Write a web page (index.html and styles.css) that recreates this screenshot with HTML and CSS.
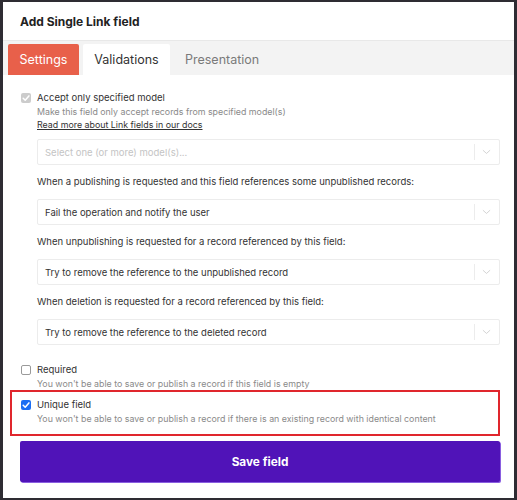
FILE: index.html
```html
<!DOCTYPE html>
<html lang="en">
<head>
<meta charset="utf-8">
<title>Add Single Link field</title>
<link rel="stylesheet" href="styles.css">
</head>
<body>
<div class="modal">
  <div class="modal-header">Add Single Link field</div>
  <div class="tabs">
    <div class="tab tab-active">Settings</div>
    <div class="tab tab-current">Validations</div>
    <div class="tab tab-plain">Presentation</div>
  </div>
  <div class="content">
    <div class="check-row">
      <span class="cb cb-disabled"><svg viewBox="0 0 10 10" class="tick"><path d="M2.2 5.2 L4.2 7.2 L7.9 2.9" /></svg></span>
      <div class="check-text">
        <div class="check-label">Accept only specified model</div>
        <div class="check-desc">Make this field only accept records from specified model(s)</div>
        <div class="check-link">Read more about Link fields in our docs</div>
      </div>
    </div>

    <div class="select select-first">
      <span class="select-value placeholder">Select one (or more) model(s)...</span>
      <span class="select-sep"></span>
      <svg class="chev" viewBox="0 0 10 6"><path d="M1 1 L5 4.6 L9 1"/></svg>
    </div>

    <div class="field-label">When a publishing is requested and this field references some unpublished records:</div>
    <div class="select">
      <span class="select-value">Fail the operation and notify the user</span>
      <span class="select-sep"></span>
      <svg class="chev" viewBox="0 0 10 6"><path d="M1 1 L5 4.6 L9 1"/></svg>
    </div>

    <div class="field-label">When unpublishing is requested for a record referenced by this field:</div>
    <div class="select">
      <span class="select-value">Try to remove the reference to the unpublished record</span>
      <span class="select-sep"></span>
      <svg class="chev" viewBox="0 0 10 6"><path d="M1 1 L5 4.6 L9 1"/></svg>
    </div>

    <div class="field-label">When deletion is requested for a record referenced by this field:</div>
    <div class="select">
      <span class="select-value">Try to remove the reference to the deleted record</span>
      <span class="select-sep"></span>
      <svg class="chev" viewBox="0 0 10 6"><path d="M1 1 L5 4.6 L9 1"/></svg>
    </div>

    <div class="check-row check-required">
      <span class="cb cb-empty"></span>
      <div class="check-text">
        <div class="check-label">Required</div>
        <div class="check-desc">You won't be able to save or publish a record if this field is empty</div>
      </div>
    </div>

    <div class="highlight">
      <div class="check-row">
        <span class="cb cb-checked"><svg viewBox="0 0 10 10" class="tick"><path d="M2.2 5.2 L4.2 7.2 L7.9 2.9" /></svg></span>
        <div class="check-text">
          <div class="check-label">Unique field</div>
          <div class="check-desc">You won't be able to save or publish a record if there is an existing record with identical content</div>
        </div>
      </div>
    </div>

    <button class="save-btn" type="button">Save field</button>
  </div>
</div>
</body>
</html>
```

FILE: styles.css
```css
* { box-sizing: border-box; }

html, body {
  margin: 0;
  padding: 0;
}

body {
  background: #2e2c33;
  padding: 2px 3px 2px 3px;
  font-family: Inter, "Noto Sans", sans-serif;
  color: #333;
}

.modal {
  width: 511px;
  height: 496px;
  background: #fff;
  display: flex;
  flex-direction: column;
}

.modal-header {
  height: 39px;
  padding: 0 0 0 17px;
  display: flex;
  align-items: center;
  font-size: 12px;
  font-weight: 700;
  color: #222;
  border-bottom: 1px solid #e8e8e8;
}

.tabs {
  height: 34px;
  background: #f3f3f3;
  display: flex;
  align-items: flex-end;
  padding-left: 5px;
}

.tab {
  height: 31px;
  display: flex;
  align-items: center;
  justify-content: center;
  font-size: 12.5px;
}

.tab-active {
  width: 71px;
  background: #e8604a;
  color: #fff;
  border-radius: 2px 2px 0 0;
}

.tab-current {
  width: 87px;
  margin-left: 4px;
  background: #fff;
  color: #333;
  border-radius: 2px 2px 0 0;
}

.tab-plain {
  padding-left: 15px;
  color: #7a7a7a;
}

.content {
  padding: 16px 14px 0 18px;
  display: flex;
  flex-direction: column;
}

.check-row {
  display: grid;
  grid-template-columns: 10px 1fr;
  column-gap: 6px;
  align-items: start;
}

.cb {
  width: 10px;
  height: 10px;
  margin-top: 2px;
  border-radius: 2px;
  display: flex;
  align-items: center;
  justify-content: center;
}

.cb-disabled {
  background: #cccccc;
}

.cb-empty {
  background: #fff;
  border: 1px solid #9a9a9a;
}

.cb-checked {
  background: #1b6ef3;
}

.tick {
  width: 10px;
  height: 10px;
  fill: none;
  stroke: #fff;
  stroke-width: 1.5;
  stroke-linecap: round;
  stroke-linejoin: round;
}

.check-label {
  font-size: 9.5px;
  line-height: 14px;
  color: #333;
}

.check-desc {
  font-size: 8.85px;
  line-height: 13px;
  color: #8a8a8a;
}

.check-link {
  font-size: 8.85px;
  line-height: 14px;
  color: #333;
  text-decoration: underline;
}

.select {
  margin-left: 16px;
  height: 26px;
  border: 1px solid #ececec;
  border-radius: 2px;
  display: flex;
  align-items: center;
  padding-left: 7px;
  margin-top: 10px;
}

.select-first {
  margin-top: 7px;
}

.select-value {
  flex: 1;
  font-size: 9.5px;
  color: #333;
}

.placeholder {
  color: #c4c4c4;
}

.select-sep {
  width: 1px;
  height: 16px;
  background: #ececec;
}

.chev {
  width: 9px;
  height: 6px;
  margin: 0 8px 0 7px;
  fill: none;
  stroke: #cfcfcf;
  stroke-width: 1;
}

.field-label {
  margin-left: 16px;
  margin-top: 10px;
  font-size: 9.5px;
  line-height: 14px;
  color: #333;
}

.check-required {
  margin-top: 18px;
}

.highlight {
  margin-left: -11px;
  border: 2px solid #e0262d;
  padding: 6px 0 9px 9px;
}

.save-btn {
  margin-top: 5px;
  margin-left: -1px;
  height: 41px;
  border: none;
  border-radius: 2px;
  background: #5013b8;
  box-shadow: 1px 1px 0 #8a5ee0;
  color: #fff;
  font-family: Inter, "Noto Sans", sans-serif;
  font-size: 11.8px;
  font-weight: 700;
}
```
